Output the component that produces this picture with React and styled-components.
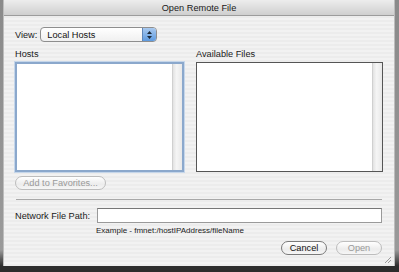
import React from "react";
import styled, { createGlobalStyle } from "styled-components";

const Global = createGlobalStyle`
  html, body { margin: 0; padding: 0; }
  body {
    background: #3a3a3a;
    font-family: "Liberation Sans", Arial, sans-serif;
    font-size: 9.2px;
    color: #111;
  }
`;

const Desk = styled.div`
  width: 399px;
  height: 272px;
  overflow: hidden;
  background: linear-gradient(to bottom, #8a8a8a 0, #9a9a9a 250px, #2c2c2c 266px);
  padding-left: 3px;
  box-sizing: border-box;
`;

const Window = styled.div`
  position: relative;
  width: 392px;
  height: 266px;
  display: flex;
  flex-direction: column;
  background: repeating-linear-gradient(to bottom, #ececec 0, #ececec 2px, #f2f2f2 2px, #f2f2f2 4px);
  border-left: 1px solid #bdbdbd;
  border-right: 1px solid #bdbdbd;
  box-sizing: border-box;
`;

const TitleBar = styled.div`
  height: 15px;
  flex: none;
  display: flex;
  align-items: center;
  justify-content: center;
  background: linear-gradient(to bottom, #ededed, #cfcfcf);
  border-bottom: 1px solid #9c9c9c;
  font-size: 9.2px;
  color: #1a1a1a;
`;

const Body = styled.div`
  flex: 1;
  display: flex;
  flex-direction: column;
  padding: 11px 11px 0 11px;
`;

const Row = styled.div`
  display: flex;
  align-items: center;
  gap: ${p => p.gap || 4}px;
`;

const Label = styled.span`
  color: #1a1a1a;
  white-space: nowrap;
`;

const Popup = styled.div`
  width: 117px;
  height: 15px;
  box-sizing: border-box;
  display: flex;
  align-items: center;
  border: 1px solid #8e8e8e;
  border-radius: 4px;
  background: linear-gradient(to bottom, #ffffff, #f0f0f0);
  overflow: hidden;
`;

const PopupText = styled.span`
  flex: 1;
  padding-left: 6px;
`;

const PopupArrows = styled.div`
  width: 13px;
  height: 100%;
  display: flex;
  align-items: center;
  justify-content: center;
  background: linear-gradient(to bottom, #a9c9ef, #5e9be0);
  border-left: 1px solid #5f86b8;
`;

const Columns = styled.div`
  display: flex;
  gap: 12px;
  margin-top: 7px;
`;

const Column = styled.div`
  display: flex;
  flex-direction: column;
  width: ${p => p.w}px;
`;

const ListBox = styled.div`
  margin-top: 3px;
  height: 110px;
  box-sizing: border-box;
  display: flex;
  justify-content: flex-end;
  background: #fff;
  border: ${p => (p.focused ? "2px solid #8ba8cc" : "1px solid #555")};
  ${p => p.focused && "box-shadow: 0 0 0 1px #c5d6ea;"}
`;

const Track = styled.div`
  width: 9px;
  background: linear-gradient(to right, #e2e2e2, #f5f5f5 40%, #e8e8e8);
  border-left: 1px solid #d0d0d0;
`;

const PillButton = styled.div`
  height: 14px;
  box-sizing: border-box;
  width: ${p => (p.w ? `${p.w}px` : "auto")};
  display: flex;
  align-items: center;
  justify-content: center;
  white-space: nowrap;
  border: 1px solid ${p => (p.disabled ? "#bdbdbd" : "#7a7a7a")};
  border-radius: 8px;
  background: linear-gradient(to bottom, #ffffff, #ececec 60%, #f6f6f6);
  color: ${p => (p.disabled ? "#9a9a9a" : "#111")};
  font-size: 9.2px;
`;

const Separator = styled.div`
  height: 1px;
  background: #a8a8a8;
  margin: 9px 1px 0 1px;
`;

const TextField = styled.div`
  flex: 1;
  height: 15px;
  margin-right: 1px;
  box-sizing: border-box;
  background: #fff;
  border: 1px solid #9a9a9a;
  border-top-color: #777;
`;

const Hint = styled.div`
  margin: 3px 0 0 81px;
  font-size: 8px;
  color: #222;
`;

const Buttons = styled.div`
  display: flex;
  justify-content: flex-end;
  gap: 9px;
  margin-top: 6px;
  padding-right: 1px;
`;

const Grip = styled.svg`
  position: absolute;
  right: 2px;
  bottom: 2px;
`;

export default function App() {
  return (
    <Desk>
      <Global />
      <Window>
        <TitleBar>Open Remote File</TitleBar>
        <Body>
          <Row gap={3}>
            <Label>View:</Label>
            <Popup>
              <PopupText>Local Hosts</PopupText>
              <PopupArrows>
                <svg width="5" height="8" viewBox="0 0 5 8">
                  <path d="M2.5 0 L5 3 L0 3 Z M2.5 8 L5 5 L0 5 Z" fill="#1d2b3c" />
                </svg>
              </PopupArrows>
            </Popup>
          </Row>
          <Columns>
            <Column w={170}>
              <Label>Hosts</Label>
              <ListBox focused>
                <Track />
              </ListBox>
            </Column>
            <Column w={188}>
              <Label>Available Files</Label>
              <ListBox>
                <Track />
              </ListBox>
            </Column>
          </Columns>
          <Row style={{ marginTop: 4 }}>
            <PillButton disabled w={91}>Add to Favorites...</PillButton>
          </Row>
          <Separator />
          <Row gap={7} style={{ marginTop: 8 }}>
            <Label>Network File Path:</Label>
            <TextField />
          </Row>
          <Hint>Example - fmnet:/hostIPAddress/fileName</Hint>
          <Buttons>
            <PillButton w={46}>Cancel</PillButton>
            <PillButton disabled w={46}>Open</PillButton>
          </Buttons>
        </Body>
        <Grip width="9" height="9" viewBox="0 0 9 9">
          <path d="M8 2 L2 8 M8 5 L5 8" stroke="#9a9a9a" strokeWidth="1" />
        </Grip>
      </Window>
    </Desk>
  );
}
